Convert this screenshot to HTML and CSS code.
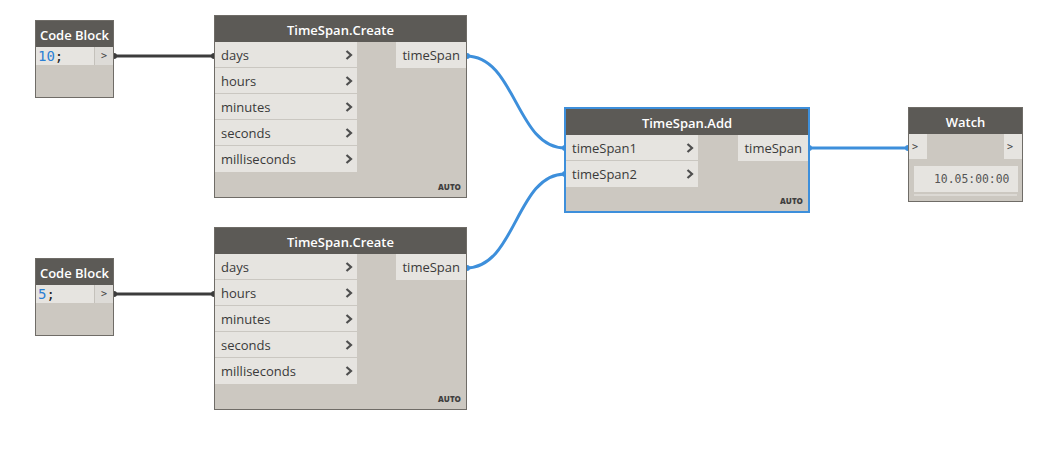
FILE: index.html
```html
<!DOCTYPE html>
<html>
<head>
<meta charset="utf-8">
<title>Dynamo graph</title>
<link rel="stylesheet" href="styles.css">
</head>
<body>
<div class="canvas">
  <svg class="wires" width="1058" height="450" viewBox="0 0 1058 450">
    <g class="wire-dark">
      <path d="M114 56 L214 56"/>
      <path d="M114 294 L214 294"/>
    </g>
    <g class="dot-dark">
      <circle cx="114" cy="56" r="3"/>
      <circle cx="214" cy="56" r="3"/>
      <circle cx="114" cy="294" r="3"/>
      <circle cx="214" cy="294" r="3"/>
    </g>
    <g class="wire-blue">
      <path d="M466 56 C 516 56, 516 148, 565 148"/>
      <path d="M466 268 C 516 268, 516 174, 565 174"/>
      <path d="M809 148 L908 148"/>
    </g>
    <g class="dot-blue">
      <circle cx="467" cy="56" r="3"/>
      <circle cx="467" cy="268" r="3"/>
      <circle cx="565" cy="148" r="3"/>
      <circle cx="565" cy="174" r="3"/>
      <circle cx="809" cy="148" r="3"/>
      <circle cx="908" cy="148" r="3"/>
    </g>
  </svg>

  <div class="node cb cb1">
    <div class="header">Code Block</div>
    <div class="cb-row"><span class="code"><span class="num">10</span>;</span><span class="gt">&gt;</span></div>
  </div>

  <div class="node cb cb2">
    <div class="header">Code Block</div>
    <div class="cb-row"><span class="code"><span class="num">5</span>;</span><span class="gt">&gt;</span></div>
  </div>

  <div class="node ts ts1">
    <div class="header">TimeSpan.Create</div>
    <div class="body">
      <div class="inputs">
        <div class="in">days<svg class="chev" viewBox="0 0 8 10"><path d="M1.5 1 L6 5 L1.5 9"/></svg></div>
        <div class="in">hours<svg class="chev" viewBox="0 0 8 10"><path d="M1.5 1 L6 5 L1.5 9"/></svg></div>
        <div class="in">minutes<svg class="chev" viewBox="0 0 8 10"><path d="M1.5 1 L6 5 L1.5 9"/></svg></div>
        <div class="in">seconds<svg class="chev" viewBox="0 0 8 10"><path d="M1.5 1 L6 5 L1.5 9"/></svg></div>
        <div class="in last">milliseconds<svg class="chev" viewBox="0 0 8 10"><path d="M1.5 1 L6 5 L1.5 9"/></svg></div>
      </div>
      <div class="outputs"><div class="out">timeSpan</div></div>
    </div>
    <div class="auto">AUTO</div>
  </div>

  <div class="node ts ts2">
    <div class="header">TimeSpan.Create</div>
    <div class="body">
      <div class="inputs">
        <div class="in">days<svg class="chev" viewBox="0 0 8 10"><path d="M1.5 1 L6 5 L1.5 9"/></svg></div>
        <div class="in">hours<svg class="chev" viewBox="0 0 8 10"><path d="M1.5 1 L6 5 L1.5 9"/></svg></div>
        <div class="in">minutes<svg class="chev" viewBox="0 0 8 10"><path d="M1.5 1 L6 5 L1.5 9"/></svg></div>
        <div class="in">seconds<svg class="chev" viewBox="0 0 8 10"><path d="M1.5 1 L6 5 L1.5 9"/></svg></div>
        <div class="in last">milliseconds<svg class="chev" viewBox="0 0 8 10"><path d="M1.5 1 L6 5 L1.5 9"/></svg></div>
      </div>
      <div class="outputs"><div class="out">timeSpan</div></div>
    </div>
    <div class="auto">AUTO</div>
  </div>

  <div class="node add">
    <div class="header">TimeSpan.Add</div>
    <div class="body">
      <div class="inputs">
        <div class="in">timeSpan1<svg class="chev" viewBox="0 0 8 10"><path d="M1.5 1 L6 5 L1.5 9"/></svg></div>
        <div class="in last">timeSpan2<svg class="chev" viewBox="0 0 8 10"><path d="M1.5 1 L6 5 L1.5 9"/></svg></div>
      </div>
      <div class="outputs"><div class="out">timeSpan</div></div>
    </div>
    <div class="auto">AUTO</div>
  </div>

  <div class="node watch">
    <div class="header">Watch</div>
    <div class="watch-ports"><span class="wp">&gt;</span><span class="wp">&gt;</span></div>
    <div class="watch-value">10.05:00:00</div>
    <div class="watch-bar"></div>
  </div>
</div>
</body>
</html>
```

FILE: styles.css
```css
* { box-sizing: border-box; }
html, body { margin: 0; padding: 0; background: #ffffff; }
.canvas {
  position: relative;
  width: 1058px;
  height: 450px;
  overflow: hidden;
  font-family: "Open Sans", "Noto Sans", sans-serif;
}
.wires { position: absolute; left: 0; top: 0; }
.wire-dark path { fill: none; stroke: #3c3c3c; stroke-width: 3; }
.dot-dark circle { fill: #3c3c3c; }
.wire-blue path { fill: none; stroke: #3d8fdb; stroke-width: 3; }
.dot-blue circle { fill: #3d8fdb; }

.node {
  position: absolute;
  display: flex;
  flex-direction: column;
  border: 1px solid #6f6c67;
  background: #ccc8c1;
}
.header {
  height: 26px;
  flex: none;
  background: #5c5a56;
  color: #ffffff;
  font-weight: 600;
  font-size: 13px;
  display: flex;
  align-items: center;
  justify-content: center;
  padding-top: 1px;
}

/* code blocks */
.cb { width: 79px; height: 78px; }
.cb1 { left: 35px; top: 20px; }
.cb2 { left: 35px; top: 258px; }
.cb-row {
  display: flex;
  height: 18px;
  background: #e6e4e0;
}
.code {
  flex: 1;
  padding-left: 2px;
  font-family: "DejaVu Sans Mono", "Liberation Mono", monospace;
  font-size: 14px;
  line-height: 18px;
  color: #222;
}
.num { color: #2a7fd4; }
.gt {
  width: 19px;
  border-left: 1px solid #c4c1bb;
  background: #dddbd7;
  font-family: "DejaVu Sans Mono", monospace;
  font-size: 10px;
  line-height: 18px;
  color: #444;
  text-align: center;
}

/* function nodes */
.ts { width: 253px; height: 183px; }
.ts1 { left: 214px; top: 15px; }
.ts2 { left: 214px; top: 227px; }
.body {
  display: flex;
  justify-content: space-between;
}
.inputs { display: flex; flex-direction: column; width: 142px; }
.add .inputs { width: 132px; }
.in {
  height: 26px;
  display: flex;
  align-items: center;
  justify-content: space-between;
  padding: 0 4px 0 6px;
  background: #e6e4e0;
  border-bottom: 1px solid #cac7c1;
  font-size: 13px;
  color: #3a3a3a;
}
.in.last { border-bottom: none; }
.chev { width: 8px; height: 10px; }
.chev path { fill: none; stroke: #4e4e4e; stroke-width: 2.2; stroke-linejoin: miter; }
.outputs { width: 70px; }
.out {
  height: 26px;
  display: flex;
  align-items: center;
  justify-content: flex-end;
  padding-right: 6px;
  background: #e6e4e0;
  font-size: 13px;
  color: #3a3a3a;
}
.auto {
  margin-top: auto;
  align-self: flex-end;
  padding: 0 5px 5px 0;
  font-size: 8px;
  font-weight: 800;
  color: #3f3f3f;
  font-family: "Open Sans", sans-serif;
}

.add {
  left: 564px;
  top: 107px;
  width: 246px;
  height: 106px;
  border: 2px solid #3d8fdb;
}

/* watch */
.watch { left: 908px; top: 107px; width: 115px; height: 95px; }
.watch-ports {
  display: flex;
  justify-content: space-between;
  height: 25px;
}
.wp {
  width: 18px;
  background: #e6e4e0;
  font-family: "DejaVu Sans Mono", monospace;
  font-size: 10px;
  line-height: 25px;
  color: #444;
  padding-left: 3px;
}
.watch-value {
  margin: 7px 4px 0 5px;
  height: 26px;
  background: #e6e4e0;
  font-family: "DejaVu Sans Mono", "Liberation Mono", monospace;
  font-size: 11.4px;
  line-height: 26px;
  color: #555;
  padding-left: 20px;
}
.watch-bar {
  margin: 2px 5px 0 5px;
  height: 2px;
  background: #dcd9d4;
}
```
